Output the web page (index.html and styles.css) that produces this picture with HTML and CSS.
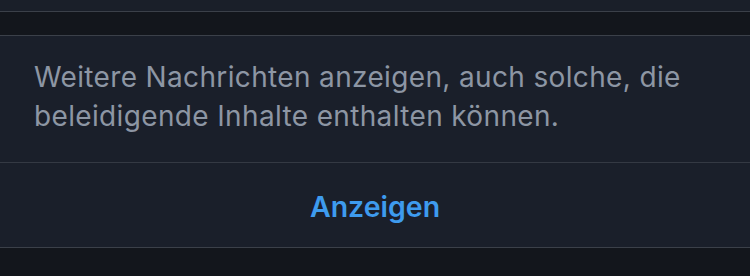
FILE: index.html
```html
<!DOCTYPE html>
<html lang="de">
<head>
<meta charset="utf-8">
<link rel="stylesheet" href="styles.css">
</head>
<body>
<div class="top"></div>
<div class="gap"></div>
<section class="card">
  <p class="message">Weitere Nachrichten anzeigen, auch solche, die beleidigende Inhalte enthalten können.</p>
  <div class="action"><span class="action-label">Anzeigen</span></div>
</section>
<div class="bottom"></div>
</body>
</html>
```
FILE: styles.css
```css
html, body {
  margin: 0;
  padding: 0;
}
body {
  width: 750px;
  height: 276px;
  overflow: hidden;
  background: #13161c;
  font-family: Inter, "Noto Sans", sans-serif;
}
.top {
  height: 11px;
  background: #1a1f29;
  border-bottom: 1px solid #3b4049;
}
.gap {
  height: 23px;
  background: #13161c;
  border-bottom: 1px solid #3b4049;
}
.card {
  background: #1a1f2a;
}
.message {
  margin: 0;
  padding: 22px 20px 26px 34px;
  font-size: 28px;
  line-height: 39px;
  letter-spacing: 0.35px;
  color: #8d96a4;
  border-bottom: 1px solid #343943;
}
.action {
  height: 81px;
  padding-top: 3px;
  display: flex;
  align-items: center;
  justify-content: center;
  border-bottom: 1px solid #3b4049;
}
.action-label {
  font-size: 28.5px;
  font-weight: 600;
  color: #3e9bee;
}
.bottom {
  height: 28px;
  background: #13161c;
}
```
